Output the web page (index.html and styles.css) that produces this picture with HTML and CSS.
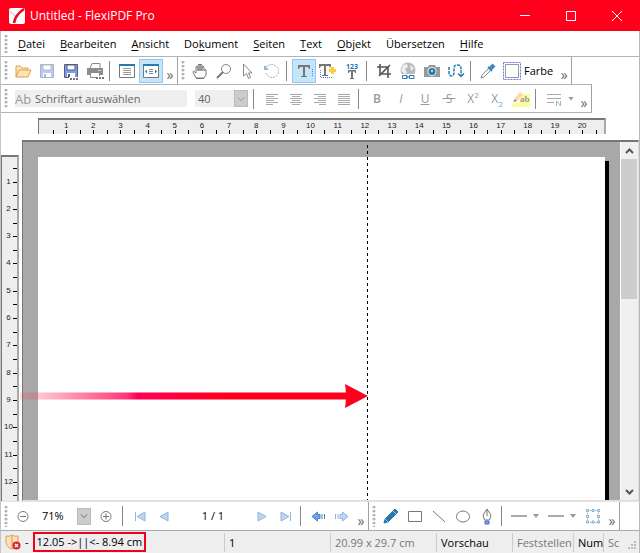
FILE: index.html
```html
<!DOCTYPE html>
<html lang="de">
<head>
<meta charset="utf-8">
<title>Untitled - FlexiPDF Pro</title>
<link rel="stylesheet" href="styles.css">
</head>
<body>
<header class="titlebar">
  <svg class="logo" viewBox="0 0 16 16"><rect width="16" height="16" rx="2" fill="#fff"/><path d="M1 3L7 9" stroke="#ddd" stroke-width="2"/><path d="M5 15C6 9 9 5 15 1" fill="none" stroke="#e30b20" stroke-width="2.5"/></svg>
  <h1>Untitled - FlexiPDF Pro</h1>
  <button class="win" aria-label="Minimieren"><svg viewBox="0 0 10 10"><path d="M0 4.500H10"/></svg></button>
  <button class="win" aria-label="Maximieren"><svg viewBox="0 0 10 10"><path d="M.5.5H9.500V9.500H.5Z"/></svg></button>
  <button class="win" aria-label="Schließen"><svg viewBox="0 0 10 10"><path d="M0 0L10 10M10 0L0 10"/></svg></button>
</header>

<nav class="menubar">
  <span class="grip"></span>
  <a href="#"><u>D</u>atei</a><a href="#"><u>B</u>earbeiten</a><a href="#"><u>A</u>nsicht</a><a href="#">Do<u>k</u>ument</a><a href="#"><u>S</u>eiten</a><a href="#"><u>T</u>ext</a><a href="#"><u>O</u>bjekt</a><a href="#">Übersetzen</a><a href="#"><u>H</u>ilfe</a>
</nav>

<div class="row">
  <div class="toolbar">
    <span class="grip"></span>
    <button class="tool" aria-label="Öffnen"><svg viewBox="0 0 18 18"><path d="M2 15V4H6L8 6H14V8M2 15L5 8H17L14 15Z" fill="#ffe3b0" stroke="#d9a253"/></svg></button>
    <button class="tool" aria-label="Speichern"><svg viewBox="0 0 18 18"><path d="M3 2.500H15.500V15.500H2.500V2.500Z" fill="#b9c9f0" stroke="#a9b4cf"/><path d="M5 3H13V8H5Z" fill="#fff" stroke="#b5bdd0"/><path d="M5 11H13V15H5Z" fill="#fff"/><path d="M6 12H8V15H6Z" fill="#a9b4cf"/></svg></button>
    <button class="tool" aria-label="Speichern unter"><svg viewBox="0 0 18 18"><path d="M2.500 2.500H15.500V15.500H2.500Z" fill="#7d9bf0" stroke="#555e75"/><path d="M5 3H13V8H5Z" fill="#fff" stroke="#555e75"/><path d="M5 11H13V15H5Z" fill="#fff"/><path d="M6 12H8V15H6Z" fill="#555e75"/><path d="M7 16.500H18" stroke="#fff" stroke-width="3"/><path d="M8 17H17" stroke="#777" stroke-width="2" stroke-dasharray="2 1"/></svg></button>
    <button class="tool" aria-label="Drucken"><svg viewBox="0 0 18 18"><path d="M4 6L6 1.500H14V6" fill="#fff" stroke="#888"/><path d="M1 6H17V13H1Z" fill="#8b8d8f"/><path d="M4.500 10.500H13.500V15.500H4.500Z" fill="#fff" stroke="#888"/><path d="M12 8.500H15" stroke="#bde58c"/><path d="M10 15.500H18" stroke="#fff" stroke-width="3"/><path d="M10 16H18" stroke="#777" stroke-width="2" stroke-dasharray="2 1"/></svg></button>
    <span class="sep"></span>
    <button class="tool" aria-label="Seitenansicht"><svg viewBox="0 0 18 18"><path d="M1.500 2.500H16.500V15.500H1.500Z" fill="#fff" stroke="#777"/><path d="M1 3H17" stroke="#267aac" stroke-width="2"/><path d="M5 6.500H13M5 8.500H13M5 10.500H13M5 12.500H13" stroke="#999"/></svg></button>
    <button class="tool on" aria-label="Seitenbreite"><svg viewBox="0 0 18 18"><path d="M1.500 2.500H16.500V15.500H1.500Z" fill="#fff" stroke="#777"/><path d="M1 3H17" stroke="#267aac" stroke-width="2"/><path d="M7 7.500H11M7 9.500H11M7 11.500H11" stroke="#888"/><path d="M5 7.500V11.500L3 9.500ZM13 7.500V11.500L15 9.500Z" fill="#267aac"/></svg></button>
    <button class="more" aria-label="Mehr">»</button>
  </div>
  <div class="toolbar">
    <span class="grip"></span>
    <button class="tool" aria-label="Hand"><svg viewBox="0 0 18 18"><path d="M5 16L2 10Q2 8 5 11V5Q6 3 7 5V9V3Q8 1 9 3V9V3Q10 1 11 3V9V5Q12 3 13 5V9Q15 6 15 8V13L13 16ZM5 16.500H13" fill="none" stroke="#777"/></svg></button>
    <button class="tool" aria-label="Lupe"><svg viewBox="0 0 18 18"><circle cx="11" cy="7" r="4.500" fill="none" stroke="#888"/><path d="M8 10L2 16" stroke="#777" stroke-width="2"/></svg></button>
    <button class="tool" aria-label="Auswahl"><svg viewBox="0 0 18 18"><path d="M4.500 2V14L7.500 11.500L9.500 16.500L11.500 15.500L9.500 11H13Z" fill="#fff" stroke="#888"/></svg></button>
    <button class="tool" aria-label="Drehen"><svg viewBox="0 0 18 18"><path d="M3 5Q9 0 14 5Q18 11 12 15Q6 17 3 11" fill="none" stroke="#aaa" stroke-dasharray="2 1"/><path d="M1 3V8H6Z" fill="#8fb9d4"/></svg></button>
    <span class="sep"></span>
    <button class="tool on" aria-label="Text"><svg viewBox="0 0 18 18"><path d="M3 3H15V7H14L13 5H10V14H12V15H6V14H8V5H5L4 7H3Z" fill="#777"/><path d="M17.500 7V15" stroke="#4b80ef" stroke-dasharray="1 1"/></svg></button>
    <button class="tool" aria-label="Text hinzufügen"><svg viewBox="0 0 18 18"><path d="M0 2H12V6H11L10 4H7V13H9V14H3V13H5V4H2L1 6H0Z" fill="#777"/><path d="M2 15.500H14M1.500 8V15" stroke="#4b80ef" stroke-dasharray="1 1"/><path d="M13.500 4V12M9.500 8.500H17.500" stroke="#fff" stroke-width="4"/><path d="M13.500 5V12M10 8.500H17" stroke="#ffcd3c" stroke-width="3"/></svg></button>
    <button class="tool" aria-label="Nummerierter Text"><svg viewBox="0 0 18 18"><text x="9" y="7" class="digits" text-anchor="middle">123</text><path d="M5 8H13V11H12L11.500 9.500H10V16H11V17H7V16H8V9.500H6.500L6 11H5Z" fill="#777"/></svg></button>
    <span class="sep"></span>
    <button class="tool" aria-label="Zuschneiden"><svg viewBox="0 0 18 18"><path d="M5 2V12H16M2 5H13V16M4 14L15 3" fill="none" stroke="#555" stroke-width="1.600"/></svg></button>
    <button class="tool" aria-label="Link"><svg viewBox="0 0 18 18"><circle cx="9" cy="8" r="7.500" fill="#b7b9ba"/><path d="M4 3L8 2 9 5 6 7 8 11 5 12 2 8ZM11 3L15 6 12 9Z" fill="#eee"/><rect x="2" y="12" width="14" height="5" fill="#fff"/><path d="M3.500 13.500H8V16.500H3.500ZM10.500 13.500H15V16.500H10.500ZM7 15H11" fill="none" stroke="#267aac"/></svg></button>
    <button class="tool" aria-label="Kamera"><svg viewBox="0 0 18 18"><path d="M1 5H5L6 3H12L13 5H17V15H1Z" fill="#999"/><circle cx="9" cy="9.500" r="4.500" fill="#eee"/><circle cx="9" cy="9.500" r="3.500" fill="#267aac"/><circle cx="9" cy="9" r="1.300" fill="#9fd0ea"/></svg></button>
    <button class="tool" aria-label="Reihenfolge"><svg viewBox="0 0 18 18"><path d="M2 5V10Q2 14 4.500 14T7 10V6Q7 3 10.500 3T14 6V14" fill="none" stroke="#267aac" stroke-width="1.500" stroke-dasharray="3 1"/><path d="M11 11.500L14 14.500L17 11.500" fill="none" stroke="#267aac" stroke-width="1.500"/></svg></button>
    <span class="sep"></span>
    <button class="tool" aria-label="Pipette"><svg viewBox="0 0 18 18"><path d="M2 16L3 13L10 6L12 8L5 15Z" fill="#fff" stroke="#888"/><path d="M9 5L13 9" stroke="#3b8ab9" stroke-width="2"/><path d="M11 7L15 3" stroke="#3b8ab9" stroke-width="4"/></svg></button>
    <button class="tool color"><svg viewBox="0 0 18 18"><path d="M.5.5H17.500V17.500H.5Z" fill="none" stroke="#6077f3" stroke-dasharray="2 1"/><path d="M2.500 2.500H15.500V15.500H2.500Z" fill="#fff" stroke="#999"/></svg>Farbe</button>
    <button class="more" aria-label="Mehr">»</button>
  </div>
</div>

<div class="row format">
  <div class="toolbar">
    <span class="grip"></span>
    <div class="fontbox"><label for="font">Ab</label><input id="font" value="Schriftart auswählen" disabled></div>
    <div class="sizebox"><input aria-label="Schriftgröße" value="40" disabled><button aria-label="Größen"><svg viewBox="0 0 10 6"><path d="M1 1L5 5L9 1"/></svg></button></div>
    <span class="sep"></span>
    <button class="tool" aria-label="Linksbündig"><svg viewBox="0 0 18 18"><path class="al" d="M3 4.500H15M3 6.500H11M3 8.500H15M3 10.500H11M3 12.500H15M3 14.500H10"/></svg></button>
    <button class="tool" aria-label="Zentriert"><svg viewBox="0 0 18 18"><path class="al" d="M3 4.500H15M5 6.500H13M3 8.500H15M5 10.500H13M3 12.500H15M5 14.500H13"/></svg></button>
    <button class="tool" aria-label="Rechtsbündig"><svg viewBox="0 0 18 18"><path class="al" d="M3 4.500H15M7 6.500H15M3 8.500H15M7 10.500H15M3 12.500H15M8 14.500H15"/></svg></button>
    <button class="tool" aria-label="Blocksatz"><svg viewBox="0 0 18 18"><path class="al" d="M3 4.500H15M3 6.500H15M3 8.500H15M3 10.500H15M3 12.500H15M3 14.500H15"/></svg></button>
    <span class="sep"></span>
    <button class="tool"><b>B</b></button>
    <button class="tool"><i>I</i></button>
    <button class="tool"><u>U</u></button>
    <button class="tool"><s>&nbsp;S&nbsp;</s></button>
    <button class="tool scr">X<sup>2</sup></button>
    <button class="tool scr">X<sub>2</sub></button>
    <button class="tool" aria-label="Hervorheben"><svg viewBox="0 0 18 18"><path d="M0 4H18V17H0Z" fill="#fffb9c"/><path d="M0 4H8V13H0Z" fill="#fff"/><path d="M1 12L3 8L8 2L11 5L6 10Z" fill="#ffd9a0"/><path d="M1 12L3 9L5 11Z" fill="#888"/><text x="8" y="12" class="ab">ab</text></svg></button>
    <span class="sep"></span>
    <button class="tool" aria-label="Absatz"><svg viewBox="0 0 18 18"><path d="M2 4.500H16M2 8.500H16M2 12.500H9" stroke="#aaa"/><path d="M11.500 16V11L15.500 16V11" fill="none" stroke="#94bdd6"/></svg></button>
    <button class="caret" aria-label="Absatzoptionen"></button>
    <button class="more" aria-label="Mehr">»</button>
  </div>
</div>

<main class="workspace">
  <div class="ruler across"><i class="lead"></i><span>1</span><span>2</span><span>3</span><span>4</span><span>5</span><span>6</span><span>7</span><span>8</span><span>9</span><span>10</span><span>11</span><span>12</span><span>13</span><span>14</span><span>15</span><span>16</span><span>17</span><span>18</span><span>19</span><span>20</span><i class="tail"></i></div>
  <div class="ruler down"><i class="lead"></i><span>1</span><span>2</span><span>3</span><span>4</span><span>5</span><span>6</span><span>7</span><span>8</span><span>9</span><span>10</span><span>11</span><span>12</span><i class="tail"></i></div>
  <div class="canvas">
    <div class="desk"><div class="page"></div></div>
    <div class="scroll">
      <button aria-label="Nach oben"><svg viewBox="0 0 9 8"><path d="M1 6L4.500 2.500L8 6"/></svg></button>
      <div class="thumb"></div>
      <button aria-label="Nach unten"><svg viewBox="0 0 9 8"><path d="M1 2L4.500 5.500L8 2"/></svg></button>
    </div>
    <div class="guide"></div>
    <svg class="pointer" viewBox="0 0 348 24" preserveAspectRatio="none"><defs><linearGradient id="fade"><stop offset="0" stop-color="#ff3050" stop-opacity=".15"/><stop offset=".33" stop-color="#ff1060" stop-opacity=".85"/><stop offset=".36" stop-color="#ff0058"/><stop offset=".62" stop-color="#ff001c"/><stop offset="1" stop-color="#ff001c"/></linearGradient></defs><path d="M0 8.500H326V15.500H0Z" fill="url(#fade)"/><path d="M325 0L348 12L325 24Q327 12 325 0Z" fill="#ff001c"/></svg>
  </div>
</main>

<div class="row bottom">
  <div class="toolbar">
    <span class="grip"></span>
    <button class="tool" aria-label="Verkleinern"><svg viewBox="0 0 18 18"><path d="M6 9.500H12"/><circle cx="9" cy="9.500" r="5"/></svg></button>
    <input class="zoom" aria-label="Zoom" value="71%">
    <button class="drop" aria-label="Zoomstufen"><svg viewBox="0 0 10 6"><path d="M1 1L5 5L9 1"/></svg></button>
    <button class="tool wide" aria-label="Vergrößern"><svg viewBox="0 0 18 18"><path d="M6 9.500H12M9 6.500V12.500"/><circle cx="9" cy="9.500" r="5"/></svg></button>
    <span class="sep"></span>
    <button class="tool nav" aria-label="Erste Seite"><svg viewBox="0 0 18 18"><path d="M14 5V14L6 9.500ZM4.500 5V14"/></svg></button>
    <button class="tool nav" aria-label="Vorherige Seite"><svg viewBox="0 0 18 18"><path d="M13 5V14L5 9.500Z"/></svg></button>
    <input class="pages" aria-label="Seite" value="1 / 1">
    <button class="tool nav" aria-label="Nächste Seite"><svg viewBox="0 0 18 18"><path d="M5 5V14L13 9.500Z"/></svg></button>
    <button class="tool nav" aria-label="Letzte Seite"><svg viewBox="0 0 18 18"><path d="M4 5V14L12 9.500ZM13.500 5V14"/></svg></button>
    <span class="sep"></span>
    <button class="tool nav" aria-label="Zurück"><svg viewBox="0 0 18 18"><path class="back" d="M11 7.500H8.500V5L3 9.500L8.500 14V11.500H11ZM13 7V12M15.500 7V12"/></svg></button>
    <button class="tool nav" aria-label="Vor"><svg viewBox="0 0 18 18"><path d="M7 7.500H9.500V5L15 9.500L9.500 14V11.500H7ZM5 7V12M2.500 7V12"/></svg></button>
    <button class="more" aria-label="Mehr">»</button>
  </div>
  <div class="toolbar">
    <span class="grip"></span>
    <button class="tool" aria-label="Stift"><svg viewBox="0 0 18 18"><path d="M2 16L3 12L13 2L16 5L6 15Z" style="fill:#267aac;stroke:#267aac"/><path d="M11 4L14 7M3 12L6 15" style="stroke:#9bc6df"/></svg></button>
    <button class="tool" aria-label="Rechteck"><svg viewBox="0 0 18 18"><path d="M2.500 4.500H15.500V14.500H2.500Z"/></svg></button>
    <button class="tool" aria-label="Linie"><svg viewBox="0 0 18 18"><path d="M3 4L15 15"/></svg></button>
    <button class="tool" aria-label="Ellipse"><svg viewBox="0 0 18 18"><ellipse cx="9" cy="9.500" rx="6.500" ry="5.500"/></svg></button>
    <button class="tool" aria-label="Feder"><svg viewBox="0 0 18 18"><path d="M9 2L13 8L11.500 13H6.500L5 8ZM9 2V9"/><path d="M7 14H11V17H7Z" style="fill:#7d9bf0;stroke:#4b6fd8"/></svg></button>
    <span class="sep"></span>
    <button class="tool" aria-label="Linienart"><svg viewBox="0 0 18 18"><path class="bar" d="M1 9H17"/></svg></button><button class="caret" aria-label="Linienarten"></button>
    <button class="tool" aria-label="Linienende"><svg viewBox="0 0 18 18"><path class="bar" d="M1 9H17"/></svg></button><button class="caret" aria-label="Linienenden"></button>
    <button class="tool" aria-label="Objekt auswählen"><svg viewBox="0 0 18 18"><path d="M3.500 3.500H14.500V15.500H3.500Z" style="stroke:#ccc"/><g style="fill:#fff;stroke:#7fb0cf"><path d="M2.500 2.500H4.500V4.500H2.500ZM8 2.500H10V4.500H8ZM13.500 2.500H15.500V4.500H13.500ZM2.500 8.500H4.500V10.500H2.500ZM13.500 8.500H15.500V10.500H13.500ZM2.500 14H4.500V16H2.500ZM8 14H10V16H8ZM13.500 14H15.500V16H13.500Z"/></g></svg></button>
    <button class="more" aria-label="Mehr">»</button>
  </div>
</div>

<footer class="status">
  <div class="coords"><svg class="shield" viewBox="0 0 16 16"><path d="M7 1Q10 3 13 2V8Q13 13 7 15Q1 13 1 8V2Q4 3 7 1Z" fill="#ffe3b5" stroke="#d7a15f"/><path d="M7 2V14" stroke="#c99a63"/><circle cx="11.500" cy="11.500" r="4" fill="#e0222c"/><path d="M10 10L13 13M13 10L10 13" stroke="#fff" stroke-width="1.200"/></svg><span>-</span><output>12.05 -&gt;||&lt;- 8.94 cm</output></div>
  <span class="cell pg">1</span>
  <span class="cell size dim">20.99 x 29.7 cm</span>
  <span class="cell view">Vorschau</span>
  <span class="cell caps dim">Feststellen</span>
  <span class="cell num">Num</span>
  <span class="cell sc dim">Sc</span>
  <svg class="resize" viewBox="0 0 9 9"><path d="M6 0H8V2H6ZM3 3H5V5H3ZM6 3H8V5H6ZM0 6H2V8H0ZM3 6H5V8H3ZM6 6H8V8H6Z" fill="#bbb"/></svg>
</footer>
</body>
</html>
```
FILE: styles.css
```css
* { box-sizing: border-box; }
body {
  margin: 0;
  min-height: 100vh;
  display: flex;
  flex-direction: column;
  background: #fff;
  color: #000;
  font: 11px/16px "Open Sans", "Noto Sans", sans-serif;
}
button, input, a, output { font: inherit; color: inherit; }
button { border: 0; background: none; padding: 0; }
input { border: 0; min-width: 0; }
svg { display: block; flex: none; }
body > :not(.titlebar) { border-left: 1px solid #c4c4c4; border-right: 1px solid #b8b8b8; }

.titlebar { display: flex; align-items: center; height: 31px; padding-left: 9px; background: #ff001c; color: #fff; }
.logo { width: 16px; height: 16px; }
.titlebar h1 { flex: 1; margin: 0 0 0 5px; font-size: 12px; font-weight: 400; }
.win { width: 46px; height: 30px; display: grid; place-items: center; }
.win svg { width: 10px; height: 10px; fill: none; stroke: #fff; }

.grip { flex: none; width: 10px; align-self: stretch; margin: 4px 0 3px; background: radial-gradient(circle at 5px 1px, #b5b5b5 1px, transparent 2px) 0 0 / 10px 4px; }
.menubar { display: flex; align-items: center; height: 25px; gap: 15px; }
.menubar .grip { margin-right: -8px; }
.menubar a { text-decoration: none; }
.menubar u { text-underline-offset: 2px; }

.row { display: flex; height: 28px; border-top: 1px solid #b4b4b4; }
.toolbar { display: flex; align-items: center; height: 100%; border-right: 1px solid #a0a0a0; }
.format { height: 29px; border-top: 0; }
.format .toolbar { border-top: 1px solid #b4b4b4; border-bottom: 1px solid #b4b4b4; }
.tool { flex: none; width: 24px; height: 24px; display: flex; align-items: center; justify-content: center; }
.tool svg { width: 18px; height: 18px; }
.tool.on { background: #c4e5fa; border: 1px solid #90c8f6; }
.sep { flex: none; width: 8px; height: 20px; background: linear-gradient(#888, #888) 2px 0 / 1px 100% no-repeat; }
.more { flex: none; width: 14px; font-size: 14px; line-height: 12px; color: #666; align-self: flex-end; margin-bottom: 3px; }
.color { width: auto; padding-left: 3px; gap: 3px; margin-right: 4px; }
.digits { font: bold 7px "Open Sans", sans-serif; fill: #267aac; }
.ab { font: bold 9px "Liberation Serif", serif; fill: #999; }
.al { stroke: #aaa; fill: none; }
.caret { flex: none; width: 11px; height: 4px; background: #999; clip-path: polygon(2px 0, 8px 0, 5px 4px); }

.fontbox { display: flex; align-items: center; width: 172px; height: 17px; margin-left: 4px; background: #efefef; color: #777; }
.fontbox label { width: 20px; font-size: 13px; color: #999; }
.fontbox input, .sizebox input { flex: 1; padding: 0; background: none; color: #666; }
.sizebox { display: flex; align-items: center; width: 53px; height: 17px; margin: 0 3px 0 8px; padding-left: 3px; background: #efefef; }
.sizebox button, .drop { display: grid; place-items: center; width: 14px; height: 17px; background: #ccc; border: 1px solid #bbb; }
.sizebox svg, .drop svg { width: 8px; height: 6px; fill: none; stroke: #888; }
.format .sep { margin-right: 1px; }
.format .tool { color: #999; font-size: 12px; }
.format b { font-weight: 600; }
.format sup, .format sub { font-size: 8px; line-height: 8px; color: #6ca6c9; }
.format sup { align-self: flex-start; margin-top: 4px; }
.format sub { align-self: flex-end; margin-bottom: 3px; }

.workspace { flex: 1; display: grid; grid-template-columns: 21px 1fr; grid-template-rows: 27px 1fr; min-height: 0; }
.ruler { display: flex; background: #eee; font: 8px/8px "Liberation Sans", sans-serif; color: #223; }
.ruler span, .ruler i { position: relative; flex: 1 1 0; min-width: 0; min-height: 0; display: flex; justify-content: center; }
.ruler .lead { flex-grow: .5; }
.across { grid-column: 2; height: 16px; margin: 5px 33px 0 16px; padding-top: 2px; border: 1px solid #777; border-width: 2px 2px 0 1px; border-right-color: #aaa; }
.across .tail { flex-grow: .3; }
.across span::before, .across span::after, .across .tail::before { content: ""; position: absolute; bottom: 0; left: 0; width: 1px; height: 4px; background: #000; }
.across span::after { left: 50%; }
.down { flex-direction: column; margin: 15px 3px 0 0; border: 1px solid #777; border-width: 2px 2px 0 1px; border-right-color: #aaa; }
.down span { align-items: center; padding-right: 2px; }
.ruler.down .lead { flex-grow: .4; }
.down .tail { flex-grow: .2; }
.down span::before, .down span::after, .down .tail::before { content: ""; position: absolute; right: 0; top: 0; width: 4px; height: 1px; background: #000; }
.down span::after { top: 50%; }
.canvas { position: relative; display: flex; border: 2px solid #777; border-width: 2px 1px 1px 1px; border-right-color: #ddd; border-bottom-color: #ddd; }
.desk { flex: 1; display: flex; overflow: hidden; background: #a8a8a8; padding: 15px 15px 0 15px; }
.page { flex: 1; background: #fff; box-shadow: 4px 4px 0 #000; }
.scroll { width: 18px; display: flex; flex-direction: column; background: #f0f0f0; border-left: 1px solid #fff; }
.scroll button { height: 17px; display: grid; place-items: center; }
.scroll svg { width: 9px; height: 8px; fill: none; stroke: #555; stroke-width: 2; }
.thumb { flex: 0 0 39%; margin: 0 1px auto 0; background: #cdcdcd; }
.guide { position: absolute; left: 344px; top: 3px; bottom: 0; width: 1px; background: repeating-linear-gradient(#000 0 3px, transparent 3px 6px); }
.pointer { position: absolute; left: -3px; top: 242px; width: 348px; height: 24px; }

.bottom { height: 29px; border-top: 1px solid #e3e3e3; background: #fff; }
.bottom svg { fill: none; stroke: #777; }
.zoom { width: 42px; padding: 0 0 0 7px; }
.drop svg { stroke: #555; }
.wide.tool { width: 29px; }
.pages { width: 74px; text-align: center; padding: 0; }
.bottom .nav path { fill: #c3d3f8; stroke: #8db8dc; }
.bottom .nav .back { fill: #7d9bf0; stroke: #3b8ab9; }
.bottom .bar { stroke: #aaa; stroke-width: 2; }
.bottom .caret { width: 13px; }

.status { display: flex; align-items: center; height: 23px; background: #eee; border-top: 1px solid #aaa; }
.coords { flex: 1; display: flex; align-items: center; gap: 4px; padding-left: 4px; }
.shield { width: 16px; height: 16px; }
output { height: 20px; padding: 0 2px; border: 2px solid #f0001c; }
.cell { flex: none; height: 19px; padding-left: 4px; border-left: 1px solid #ccc; line-height: 19px; overflow: hidden; white-space: nowrap; }
.pg, .size { width: 106px; }
.view { width: 76px; }
.caps { width: 61px; }
.num { width: 30px; }
.sc { width: 17px; }
.dim { color: #777; }
.resize { width: 9px; height: 9px; margin: 6px 2px 0 8px; }
```
